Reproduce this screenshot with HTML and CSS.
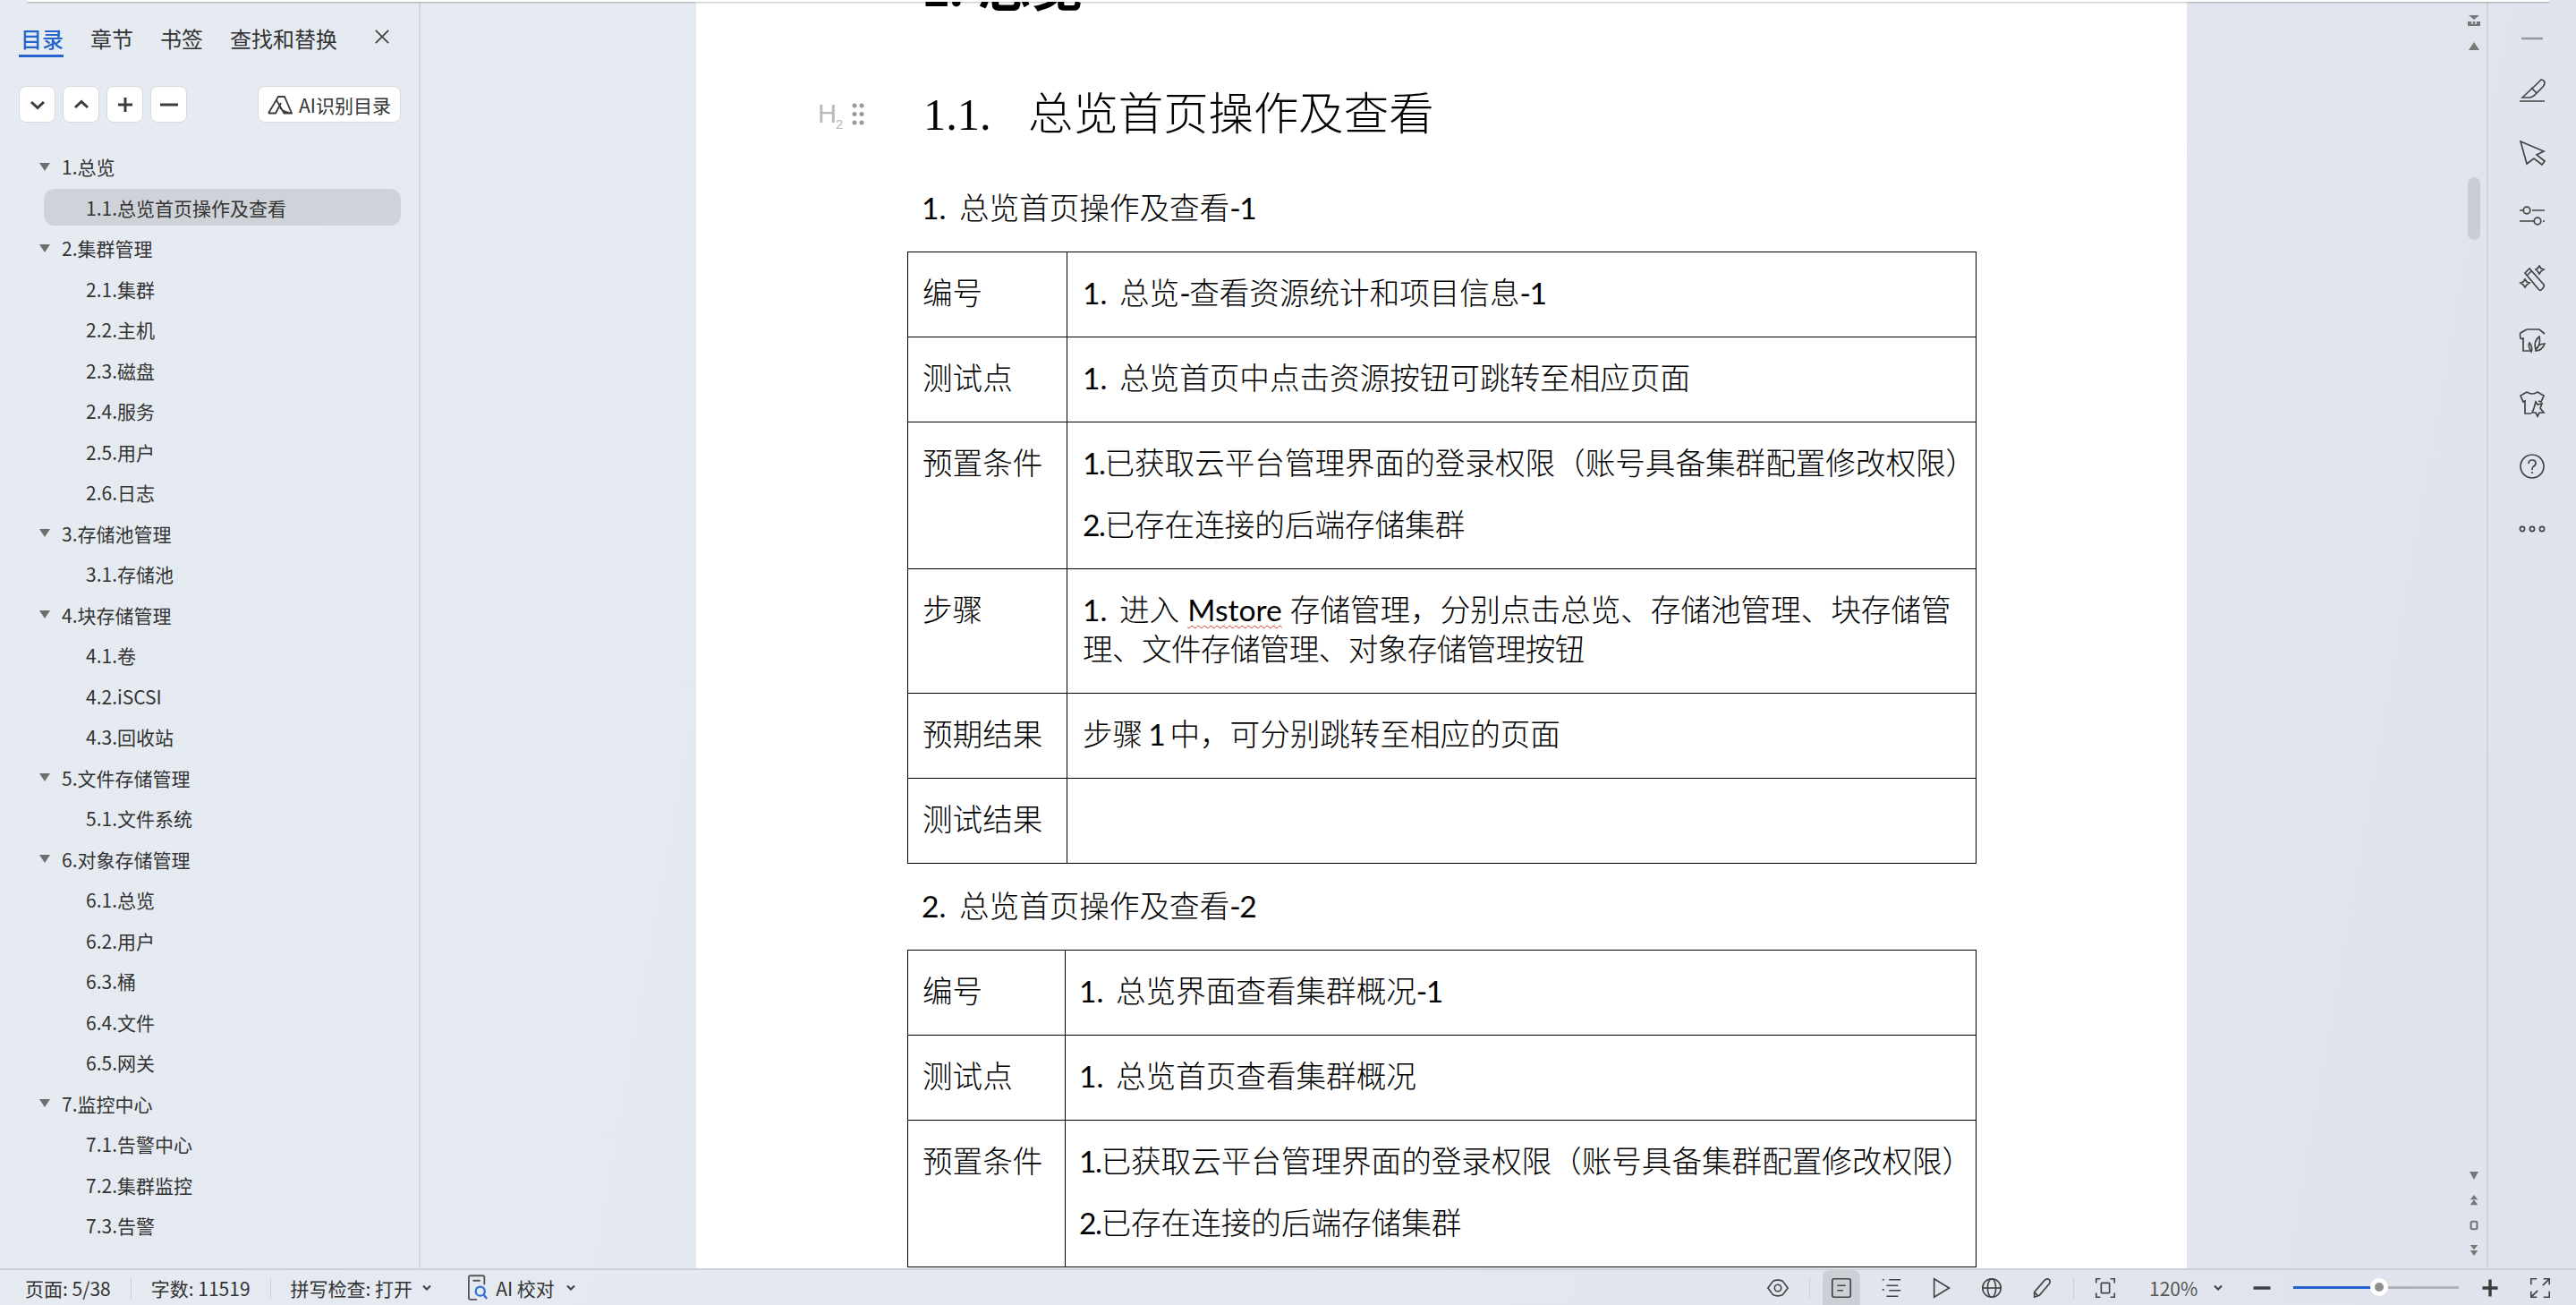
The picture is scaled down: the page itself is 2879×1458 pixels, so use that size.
FILE: index.html
```html
<!DOCTYPE html>
<html lang="zh-CN">
<head>
<meta charset="utf-8">
<title>文档</title>
<link rel="stylesheet" href="styles.css">
</head>
<body>
<div class="topstrip"></div>
<div class="main">
  <aside class="sidebar">
    <div class="tabs">
      <span class="tab active">目录</span>
      <span class="tab">章节</span>
      <span class="tab">书签</span>
      <span class="tab">查找和替换</span>
      <svg class="close" viewBox="0 0 20 20"><path d="M2 2L18 18M18 2L2 18"/></svg>
    </div>
    <div class="tools">
      <button class="tbtn"><svg viewBox="0 0 20 20"><path d="M3 7L10 13.500L17 7"/></svg></button>
      <button class="tbtn"><svg viewBox="0 0 20 20"><path d="M3 13L10 6.500L17 13"/></svg></button>
      <button class="tbtn"><svg viewBox="0 0 20 20"><path d="M10 2V18M2 10H18"/></svg></button>
      <button class="tbtn"><svg viewBox="0 0 20 20"><path d="M0 10H20"/></svg></button>
      <button class="aibtn"><svg viewBox="0 0 28 22"><path d="M1 20.500L12 2H19L27 20.500H18.500L10 6M1 20.500H9L15 9M14 14.500Q17 19 27 20.500"/></svg><span>AI识别目录</span></button>
    </div>
    <ul class="toc">
      <li class="t1">1.总览</li>
      <li class="t2 cur"><span>1.1.总览首页操作及查看</span></li>
      <li class="t1">2.集群管理</li>
      <li class="t2"><span>2.1.集群</span></li>
      <li class="t2"><span>2.2.主机</span></li>
      <li class="t2"><span>2.3.磁盘</span></li>
      <li class="t2"><span>2.4.服务</span></li>
      <li class="t2"><span>2.5.用户</span></li>
      <li class="t2"><span>2.6.日志</span></li>
      <li class="t1">3.存储池管理</li>
      <li class="t2"><span>3.1.存储池</span></li>
      <li class="t1">4.块存储管理</li>
      <li class="t2"><span>4.1.卷</span></li>
      <li class="t2"><span>4.2.iSCSI</span></li>
      <li class="t2"><span>4.3.回收站</span></li>
      <li class="t1">5.文件存储管理</li>
      <li class="t2"><span>5.1.文件系统</span></li>
      <li class="t1">6.对象存储管理</li>
      <li class="t2"><span>6.1.总览</span></li>
      <li class="t2"><span>6.2.用户</span></li>
      <li class="t2"><span>6.3.桶</span></li>
      <li class="t2"><span>6.4.文件</span></li>
      <li class="t2"><span>6.5.网关</span></li>
      <li class="t1">7.监控中心</li>
      <li class="t2"><span>7.1.告警中心</span></li>
      <li class="t2"><span>7.2.集群监控</span></li>
      <li class="t2"><span>7.3.告警</span></li>
    </ul>
  </aside>

  <section class="docarea">
    <article class="page">
      <div class="marker">
        <span class="hmark">H<sub>2</sub></span>
        <svg class="grip" viewBox="0 0 14 25"><circle cx="3" cy="3" r="2.500"/><circle cx="11" cy="3" r="2.500"/><circle cx="3" cy="12.500" r="2.500"/><circle cx="11" cy="12.500" r="2.500"/><circle cx="3" cy="22" r="2.500"/><circle cx="11" cy="22" r="2.500"/></svg>
      </div>
      <div class="content">
        <h1><span class="h1num">2.</span>总览</h1>
        <h2><span class="h2num">1.1.</span>总览首页操作及查看</h2>
        <p class="para"><span class="num">1.</span>总览首页操作及查看<span class="lat">-1</span></p>
        <table class="t-a">
          <colgroup><col class="c1"><col></colgroup>
          <tr><td>编号</td><td><span class="num">1.</span>总览<span class="lat">-</span>查看资源统计和项目信息<span class="lat">-1</span></td></tr>
          <tr><td>测试点</td><td><span class="num">1.</span>总览首页中点击资源按钮可跳转至相应页面</td></tr>
          <tr><td>预置条件</td><td><p><span class="lat">1.</span>已获取云平台管理界面的登录权限（账号具备集群配置修改权限）</p><p><span class="lat">2.</span>已存在连接的后端存储集群</p></td></tr>
          <tr><td>步骤</td><td><span class="num">1.</span>进入 <span class="wavy">Mstore</span> 存储管理，分别点击总览、存储池管理、块存储管<br><span class="tight">理、文件存储管理、对象存储管理按钮</span></td></tr>
          <tr><td>预期结果</td><td><span class="narrow">步骤 <span class="lat">1</span> 中，</span>可分别跳转至相应的页面</td></tr>
          <tr><td>测试结果</td><td></td></tr>
        </table>
        <p class="para"><span class="num">2.</span>总览首页操作及查看<span class="lat">-2</span></p>
        <table class="t-b">
          <colgroup><col class="c1"><col></colgroup>
          <tr><td>编号</td><td><span class="num">1.</span>总览界面查看集群概况<span class="lat">-1</span></td></tr>
          <tr><td>测试点</td><td><span class="num">1.</span>总览首页查看集群概况</td></tr>
          <tr><td>预置条件</td><td><p><span class="lat">1.</span>已获取云平台管理界面的登录权限（账号具备集群配置修改权限）</p><p><span class="lat">2.</span>已存在连接的后端存储集群</p></td></tr>
        </table>
      </div>
    </article>
    <div class="scrollcol">
      <div class="sc-top">
        <svg viewBox="0 0 14 12"><path class="fill" d="M1 0H13L7 5ZM0 7H14V12H0Z"/><path class="cut" d="M5 7V10M9 7V10"/></svg>
        <svg viewBox="0 0 14 12"><path class="fill" d="M7 2L13 11H1Z"/></svg>
      </div>
      <div class="thumb"></div>
      <div class="sc-bot">
        <svg viewBox="0 0 14 12"><path class="fill" d="M2 2H12L7 11Z"/></svg>
        <svg viewBox="0 0 14 14"><path class="fill" d="M7 0L12 6H2ZM7 6L12 13H2Z"/></svg>
        <svg viewBox="0 0 14 14"><rect class="ring" x="3" y="2" width="8" height="10" rx="2"/></svg>
        <svg viewBox="0 0 14 14"><path class="fill" d="M2 0H12L7 6ZM2 7H12L7 14Z"/></svg>
      </div>
    </div>
  </section>

  <nav class="rail">
    <svg class="rail-min" viewBox="0 0 24 4"><path d="M0 2H24"/></svg>
    <svg viewBox="0 0 28 28"><path d="M3 22L18 8L24 2Q27 2 28 5Q28 8 26 10L16 20L12 22Z M13 11L19 17 M0 26H28"/></svg>
    <svg viewBox="0 0 28 28"><path d="M1 1L27 12L19 16L28 23L25 27L16 20L8 26Z"/></svg>
    <svg viewBox="0 0 28 28"><path d="M0 8H4M14 8H28M0 20H16M26 20H28"/><circle cx="8" cy="8" r="3.800"/><circle cx="20" cy="20" r="3.800"/></svg>
    <svg viewBox="0 0 28 28"><path d="M6 8L11 3L27 21Q28 23 26 25L24 27Q23 28 21 26ZM9 10L14 5"/><path d="M22 0L24 3L27 4L24 6L22 9L20 6L18 4L20 3ZM6 15L8 18L11 19L8 21L6 24L4 21L1 19L4 18Z"/></svg>
    <svg viewBox="0 0 28 28"><path d="M8 1H22L28 6M8 1L1 5Q0 6 1 11L4 12V25H13M4 12V10"/><path d="M22 9Q15 14 18 24Q24 18 22 9ZM11 16Q9 20 13 26Q15 21 11 16ZM28 17Q20 17 18 25Q25 25 28 17Z"/></svg>
    <svg viewBox="0 0 28 28"><path d="M8 1Q14 5 20 1L27 5L24 12L21 11M8 1L1 5L4 12L6 11V25H13"/><path d="M18 12L20 15L25 14L23 19L27 24L22 24L20 28L18 24L14 24L16 19Z"/></svg>
    <svg viewBox="0 0 28 28"><circle cx="14" cy="14" r="13"/><path d="M10 11Q10 7 14 7Q18 7 18 10.500Q18 13 15 14.500Q14 15.500 14 18M14 20V22"/></svg>
    <svg viewBox="0 0 28 28"><circle cx="3" cy="14" r="2.600"/><circle cx="14" cy="14" r="2.600"/><circle cx="25" cy="14" r="2.600"/></svg>
  </nav>
</div>

<footer class="status">
  <div class="st-left">
    <span>页面: 5/38</span><i class="vsep"></i>
    <span>字数: 11519</span><i class="vsep"></i>
    <span>拼写检查: 打开</span>
    <svg class="caret c-a" viewBox="0 0 12 8"><path d="M2 1.500L6 5.500L10 1.500"/></svg>
    <svg class="aiproof" viewBox="0 0 24 32"><path class="d" d="M11 30H3Q1 30 1 28V3Q1 1 3 1H18Q20 1 20 3V12M6 7H15"/><circle class="b" cx="15" cy="20" r="5.500"/><path class="b" d="M19 24L23 29"/></svg>
    <span class="aitxt">AI 校对</span>
    <svg class="caret c-b" viewBox="0 0 12 8"><path d="M2 1.500L6 5.500L10 1.500"/></svg>
  </div>
  <div class="st-right">
    <span class="sb"><svg viewBox="0 0 28 28"><path d="M2 14L8 6Q14 3 20 6L26 14L20 22Q14 25 8 22Z"/><circle cx="14" cy="14" r="4"/></svg></span>
    <i class="vsep"></i>
    <span class="sb on"><svg viewBox="0 0 28 28"><rect x="3" y="3" width="22" height="22" rx="2"/><path d="M9 11H19M9 17H16"/></svg></span>
    <span class="sb"><svg viewBox="0 0 28 28"><path d="M3 4H5M11 4H25M8 11H22M3 16H5M11 17H25M8 24H22"/></svg></span>
    <span class="sb"><svg viewBox="0 0 28 28"><path d="M5 3L23 14L5 25Z"/></svg></span>
    <span class="sb"><svg viewBox="0 0 28 28"><circle cx="14" cy="14" r="11"/><ellipse cx="14" cy="14" rx="5" ry="11"/><path d="M3 14H25"/></svg></span>
    <span class="sb"><svg viewBox="0 0 28 28"><path d="M5 25L5 19L17 5Q20 2 23 4Q25 7 22 10L11 23ZM5 19L9 23"/></svg></span>
    <i class="vsep"></i>
    <span class="sb"><svg viewBox="0 0 28 28"><path d="M8 3H3V8M20 3H25V8M8 25H3V20M20 25H25V20"/><rect x="9" y="8" width="10" height="12" rx="1"/></svg></span>
    <span class="zoomtxt">120%</span>
    <svg class="caret zc" viewBox="0 0 12 8"><path d="M2 1.500L6 5.500L10 1.500"/></svg>
    <span class="sb mn"><svg class="thick" viewBox="0 0 28 28"><path d="M3 14H25"/></svg></span>
    <div class="slider"><div class="fill-l"></div><div class="knob"></div></div>
    <span class="sb"><svg class="thick" viewBox="0 0 28 28"><path d="M14 3V25M4 14H24"/></svg></span>
    <span class="sb"><svg viewBox="0 0 28 28"><path d="M3 10V3H10M18 3H25V10M25 18V25H18M10 25H3V18M25 3L17 11M3 25L11 17"/></svg></span>
  </div>
</footer>
</body>
</html>
```

FILE: styles.css
```css
* { box-sizing: border-box; }
html, body { margin: 0; height: 100%; }
body {
  width: 2879px;
  height: 1458px;
  overflow: hidden;
  display: flex;
  flex-direction: column;
  position: relative;
  background: linear-gradient(100deg, #e6ebf2 0%, #e3e7ef 55%, #e0e3ec 100%);
  font-family: "Noto Sans CJK SC", "Noto Sans", sans-serif;
  color: #333;
}
.topstrip {
  position: absolute;
  left: 30px;
  right: 30px;
  top: 0;
  height: 2px;
  background: #fff;
  box-shadow: 0 1px 2px rgba(0, 0, 0, .28);
  z-index: 5;
}
.main { flex: 1; display: flex; min-height: 0; }

/* sidebar */
.sidebar {
  width: 470px;
  flex: none;
  border-right: 2px solid #d3d8df;
}
.tabs {
  height: 96px;
  padding: 23px 0 0 23px;
  display: flex;
  align-items: flex-start;
  gap: 30px;
  position: relative;
}
.tab {
  font-size: 24px;
  line-height: 40px;
  height: 41px;
  color: #333;
}
.tab.active {
  color: #2464cc;
  font-weight: 500;
  position: relative;
}
.tab.active::after {
  content: "";
  position: absolute;
  left: -2px;
  right: 0;
  top: 38px;
  height: 3px;
  background: #2464cc;
}
.close {
  position: absolute;
  left: 418px;
  top: 32px;
  width: 18px;
  height: 18px;
  fill: none;
  stroke: #444;
  stroke-width: 2;
}
.tools {
  height: 41px;
  padding-left: 21px;
  display: flex;
  gap: 8px;
}
.tbtn, .aibtn {
  height: 41px;
  background: #fff;
  border: 1px solid #d6dae0;
  border-radius: 8px;
  padding: 0;
  display: flex;
  align-items: center;
  justify-content: center;
  font-family: inherit;
  color: #333;
}
.tbtn { width: 41px; }
.tbtn svg { width: 20px; height: 20px; fill: none; stroke: #3c3c3c; stroke-width: 3; }
.aibtn {
  width: 160px;
  margin-left: 71px;
  font-size: 21px;
  gap: 7px;
}
.aibtn svg { width: 28px; height: 22px; fill: none; stroke: #3c3c3c; stroke-width: 1.800; }
.toc {
  list-style: none;
  margin: 26.500px 0 0;
  padding: 0;
  font-size: 21px;
  color: #333;
}
.toc li {
  height: 45.500px;
  display: flex;
  align-items: center;
  white-space: nowrap;
}
.t1 { padding-left: 69px; position: relative; }
.t1::before {
  content: "";
  position: absolute;
  left: 44px;
  top: 18px;
  border-left: 6px solid transparent;
  border-right: 6px solid transparent;
  border-top: 9px solid #6e6e6e;
}
.t2 { padding-left: 49px; }
.t2 span {
  display: flex;
  align-items: center;
  height: 41px;
  width: 399px;
  padding-left: 47px;
  border-radius: 12px;
}
.t2.cur span { background: #cfd3d9; }

/* document */
.docarea {
  flex: 1;
  min-width: 0;
  display: flex;
  padding-left: 308px;
  border-right: 2px solid #cfd4db;
}
.page {
  width: 1666px;
  flex: none;
  background: #fff;
  overflow: hidden;
  position: relative;
  color: #000;
  padding-left: 236px;
}
.marker {
  position: absolute;
  left: 136px;
  top: 112px;
  display: flex;
  align-items: center;
  gap: 11px;
  color: #b8b8b8;
}
.hmark {
  font-family: "Liberation Sans", sans-serif;
  font-size: 29px;
  line-height: 30px;
  font-weight: 400;
  letter-spacing: -1px;
}
.hmark sub { font-size: 15px; line-height: 0; }
.grip { width: 14px; height: 25px; fill: #9a9a9a; }
.content {
  margin-top: -42px;
  font-family: Lato, "Noto Sans CJK SC", sans-serif;
  font-size: 33.600px;
  font-weight: 300;
  line-height: 44px;
}
h1 {
  margin: 0;
  height: 60px;
  font-family: "Liberation Serif", "Noto Sans CJK SC", serif;
  font-size: 58.800px;
  line-height: 60px;
  font-weight: 700;
  padding-left: 18px;
  display: flex;
}
.h1num { width: 61px; flex: none; }
h2 {
  margin: 76px 0 0;
  height: 68px;
  padding-left: 18px;
  font-family: "Liberation Serif", "Noto Sans CJK SC", serif;
  font-size: 50.400px;
  line-height: 68px;
  font-weight: 300;
  display: flex;
}
.h2num { width: 117px; flex: none; }
.para {
  margin: 0;
  padding: 25px 0 27px 16px;
}
h2 + .para { padding-top: 48px; }
.num { display: inline-block; width: 41px; font-weight: 400; }
.para .num { width: 42px; }
.lat { font-weight: 400; letter-spacing: -1.500px; }
.tight { letter-spacing: -.6px; }
.narrow { word-spacing: -3px; }
table {
  width: 1195px;
  border-collapse: collapse;
  table-layout: fixed;
  color: #000;
}
col.c1 { width: 178px; }
.t-b col.c1 { width: 176px; }
td {
  border: 1px solid #000;
  padding: 23px 6px 27px 16px;
  vertical-align: top;
  white-space: nowrap;
}
td + td { padding-left: 17px; }
.t-b td + td { padding-left: 15px; }
td p { margin: 0; }
td p + p { margin-top: 25px; }
.wavy {
  font-weight: 400;
  text-decoration: underline wavy #d9362a 1px;
  text-underline-offset: 4px;
}

/* scrollbar column */
.scrollcol {
  width: 28px;
  margin-left: auto;
  display: flex;
  flex-direction: column;
  align-items: center;
}
.scrollcol svg { width: 14px; height: 12px; display: block; }
.fill { fill: #777; }
.cut { stroke: #e3e7ef; stroke-width: 1.500; fill: none; }
.ring { fill: none; stroke: #777; stroke-width: 2.500; }
.sc-top { padding-top: 17px; display: flex; flex-direction: column; gap: 16px; }
.thumb {
  width: 14px;
  height: 70px;
  margin-top: 141px;
  background: #c9ced6;
  border-radius: 7px;
}
.sc-bot {
  margin-top: auto;
  padding-bottom: 14px;
  display: flex;
  flex-direction: column;
  gap: 16px;
}

/* right rail */
.rail {
  width: 98px;
  flex: none;
  display: flex;
  flex-direction: column;
  align-items: center;
  padding-top: 41px;
  gap: 42px;
}
.rail svg {
  width: 28px;
  height: 28px;
  flex: none;
  fill: none;
  stroke: #444;
  stroke-width: 1.700;
  overflow: visible;
}
.rail svg.rail-min { width: 24px; height: 4px; stroke: #999; stroke-width: 2.500; }

/* status bar */
.status {
  height: 41px;
  flex: none;
  border-top: 2px solid #ccd1d8;
  display: flex;
  align-items: center;
  justify-content: space-between;
  font-size: 21px;
  color: #333;
  white-space: nowrap;
}
.st-left {
  display: flex;
  align-items: center;
  padding-left: 28px;
  gap: 22px;
}
.vsep { width: 1px; height: 24px; background: #cdd1d8; display: block; }
.caret { width: 12px; height: 8px; fill: none; stroke: #444; stroke-width: 2.200; }
.c-a { margin-left: -12px; }
.c-b { margin-left: -10px; }
.aiproof { width: 22px; height: 30px; margin-left: 18px; fill: none; }
.aiproof .d { stroke: #555; stroke-width: 2; }
.aiproof .b { stroke: #2f6fd6; stroke-width: 2.500; }
.aitxt { margin-left: -13px; }
.st-right {
  display: flex;
  align-items: center;
  gap: 14px;
  padding-right: 19px;
  height: 100%;
}
.sb {
  width: 42px;
  height: 100%;
  display: flex;
  align-items: center;
  justify-content: center;
  border-radius: 8px 8px 0 0;
}
.sb.on { background: #cbcfd6; }
.sb svg { width: 26px; height: 26px; fill: none; stroke: #444; stroke-width: 1.800; }
.sb svg.thick { width: 24px; height: 24px; stroke-width: 4; stroke: #3c3c3c; }
.zoomtxt { width: 54px; margin-left: 14px; color: #555; }
.caret.zc { width: 18px; padding: 0 3px; }
.mn { margin-left: 5px; }
.slider {
  width: 185px;
  height: 3px;
  background: #b1b3b8;
  position: relative;
}
.fill-l { width: 96px; height: 3px; background: #2464cc; }
.knob {
  position: absolute;
  left: 86px;
  top: -9px;
  width: 20px;
  height: 20px;
  border-radius: 50%;
  background: #8f8f8f;
  border: 5px solid #fff;
}
```
